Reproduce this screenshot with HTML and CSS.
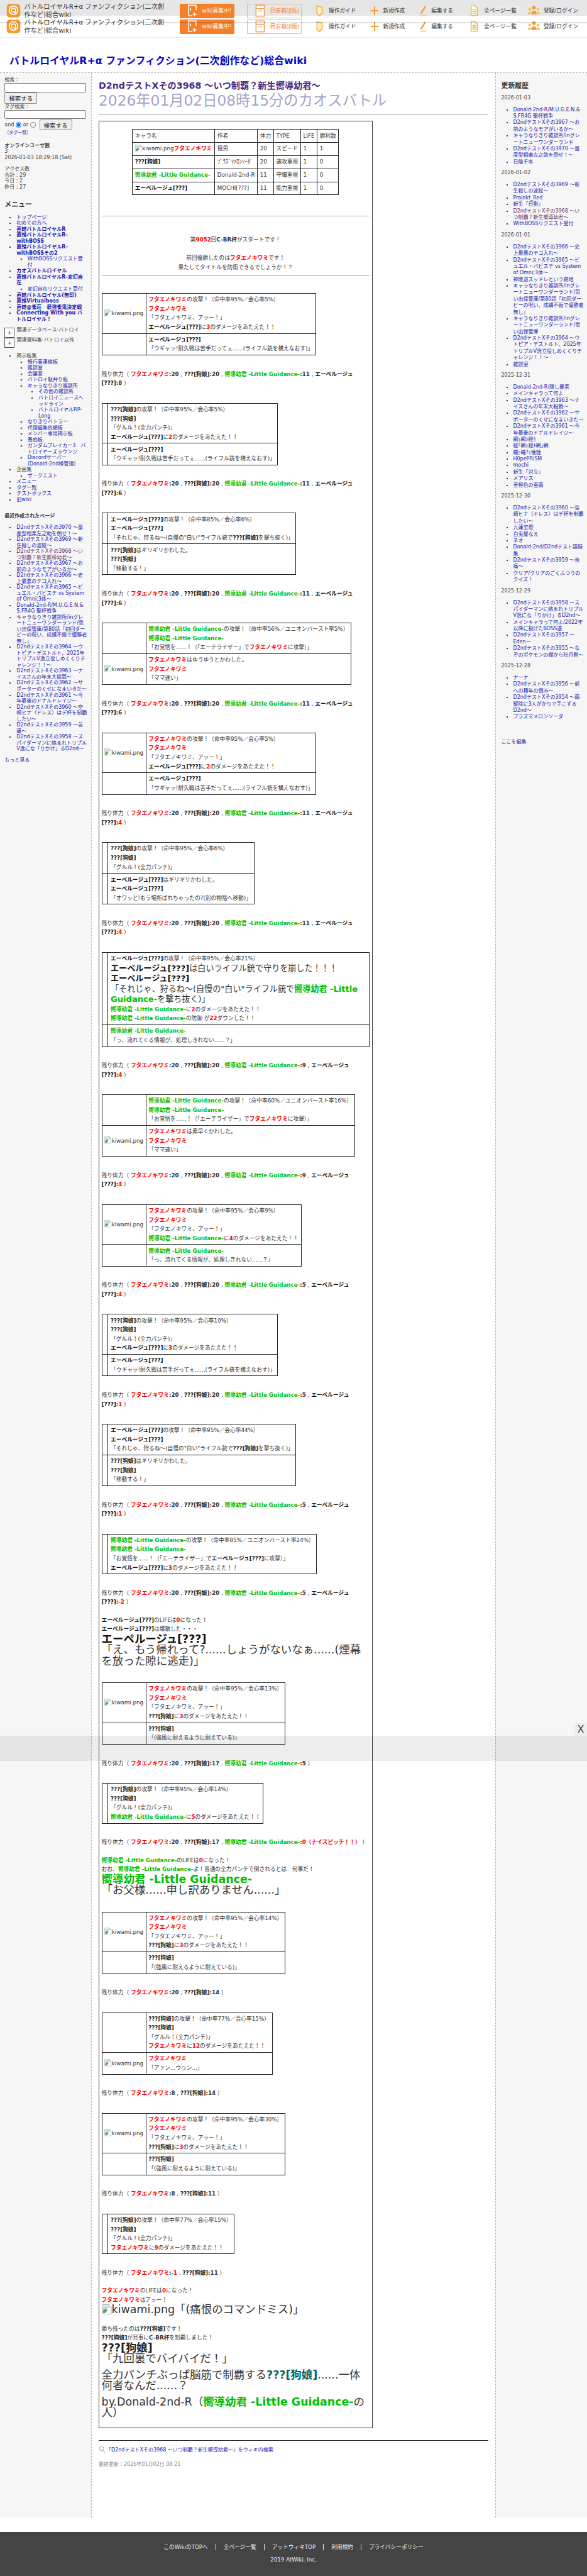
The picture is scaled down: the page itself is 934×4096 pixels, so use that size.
FILE: index.html
```html
<!DOCTYPE html>
<html lang="ja">
<head>
    <meta charset="utf-8">
    <title>D2ndテストXその3968 ～いつ制覇？新生嚮導幼君～</title>
    <link rel="stylesheet" href="styles.css">
</head>
<body>
    <!-- shared icons -->
    <svg class="defs" aria-hidden="true">
        <symbol id="i-logo" viewBox="0 0 32 32"><rect x="1" y="1" width="30" height="30" rx="7" fill="#f49a2c"/><circle cx="16" cy="15" r="9.5" fill="none" stroke="#fff" stroke-width="2.6"/><circle cx="16" cy="15" r="4.5" fill="none" stroke="#fff" stroke-width="2"/><path d="M20 15v7" stroke="#fff" stroke-width="2"/></symbol>
        <symbol id="i-guide" viewBox="0 0 16 26"><path d="M2 2l12 3v13l-6 7-6-5z" fill="#fff6d8" stroke="#eeb23e" stroke-width="2.4"/><path d="M9 6v15" stroke="#f7d98a" stroke-width="1.5"/></symbol>
        <symbol id="i-plus" viewBox="0 0 20 24"><path d="M10 2v20M1 12h18" stroke="#f0a030" stroke-width="3"/></symbol>
        <symbol id="i-pen" viewBox="0 0 18 26"><path d="M12 2l3 2-9 15-3 2 0-4z" fill="#f0a030"/><path d="M1 24h15" stroke="#f6cf6a" stroke-width="2.5"/></symbol>
        <symbol id="i-page" viewBox="0 0 18 26"><path d="M2 2h9l5 5v17H2z" fill="#fff9e8" stroke="#eeb23e" stroke-width="2"/><path d="M5 11h8M5 15h8M5 19h8" stroke="#eeb23e" stroke-width="1.6"/></symbol>
        <symbol id="i-users" viewBox="0 0 26 24"><circle cx="13" cy="5" r="4" fill="#f0a030"/><circle cx="4" cy="9" r="3" fill="#f6c25a"/><circle cx="22" cy="9" r="3" fill="#f6c25a"/><path d="M7 20c0-6 2-8 6-8s6 2 6 8z" fill="#f0a030"/><path d="M0 20c0-4 1-6 4-6l2 1-1 5zM26 20c0-4-1-6-4-6l-2 1 1 5z" fill="#f6c25a"/></symbol>
        <symbol id="i-wanted" viewBox="0 0 22 30"><path d="M14 2H2v25h9" fill="none" stroke="#fff" stroke-width="2.4"/><path d="M14 2h6v12" fill="none" stroke="#fff" stroke-width="2.4"/><path d="M16 19v9M12 23.500h9" stroke="#fff" stroke-width="2.4"/><path d="M7 8v7" stroke="#fff" stroke-width="2"/></symbol>
        <symbol id="i-box" viewBox="0 0 24 30"><rect x="2" y="2" width="20" height="26" fill="#fff" stroke="#f2a35f" stroke-width="2.400"/><path d="M2 10h20" stroke="#f2a35f" stroke-width="2.400"/><path d="M8 15h8" stroke="#f2a35f" stroke-width="2"/></symbol>
        <symbol id="i-broken" viewBox="0 0 16 16"><path d="M1 .500h10l4 4v11H1z" fill="#fff" stroke="#a8a8a8"/><path d="M11 .500v4h4" fill="#e8e8e8" stroke="#a8a8a8"/><path d="M2 2h8v6l-8 5z" fill="#c4dbf6"/><path d="M2 14V10l4-3 3 3-4 4z" fill="#4fa843"/></symbol>
        <symbol id="i-search" viewBox="0 0 14 16"><circle cx="6" cy="6" r="4.600" fill="none" stroke="#999" stroke-width="1.200"/><path d="M9 10l4 5" stroke="#999" stroke-width="1.300"/></symbol>
    </svg>

    <header class="topbar">
        <div class="nav-clip ghost">
            <span class="ghost-text ghost-rss">RSS</span>
            <span class="ghost-text ghost-find">ページ検索</span>
            <div class="nav">
                <svg class="logo"><use href="#i-logo"/></svg>
                <div class="site-name">バトルロイヤルR+α ファンフィクション(二次創作など)総合wiki</div>
                <a class="btn-orange"><svg class="btn-icon"><use href="#i-wanted"/></svg>wiki募集中!</a>
                <a class="btn-outline"><svg class="btn-icon"><use href="#i-box"/></svg>目安箱(β版)</a>
                <a class="nav-item guide"><svg><use href="#i-guide"/></svg>操作ガイド</a>
                <a class="nav-item add"><svg><use href="#i-plus"/></svg>新規作成</a>
                <a class="nav-item pen"><svg><use href="#i-pen"/></svg>編集する</a>
                <a class="nav-item all"><svg><use href="#i-page"/></svg>全ページ一覧</a>
                <a class="nav-item login"><svg><use href="#i-users"/></svg>登録/ログイン</a>
            </div>
        </div>
        <div class="nav-clip second">
            <div class="nav">
                <svg class="logo"><use href="#i-logo"/></svg>
                <div class="site-name">バトルロイヤルR+α ファンフィクション(二次創作など)総合wiki</div>
                <a class="btn-orange"><svg class="btn-icon"><use href="#i-wanted"/></svg>wiki募集中!</a>
                <a class="btn-outline"><svg class="btn-icon"><use href="#i-box"/></svg>目安箱(β版)</a>
                <a class="nav-item guide"><svg><use href="#i-guide"/></svg>操作ガイド</a>
                <a class="nav-item add"><svg><use href="#i-plus"/></svg>新規作成</a>
                <a class="nav-item pen"><svg><use href="#i-pen"/></svg>編集する</a>
                <a class="nav-item all"><svg><use href="#i-page"/></svg>全ページ一覧</a>
                <a class="nav-item login"><svg><use href="#i-users"/></svg>登録/ログイン</a>
            </div>
        </div>
        <div class="bar-shadow"></div>
    </header>

    <h1 class="wiki-title"><a>バトルロイヤルR+α ファンフィクション(二次創作など)総合wiki</a></h1>

    <div class="cols">
        <aside class="menu">
            <form class="search">
                <div>検索 :</div>
                <input type="text" class="field">
                <button type="button" class="go">検索する</button>
                <div>タグ検索 :</div>
                <input type="text" class="field">
                <div class="andor">and <input type="radio" name="m" checked> or <input type="radio" name="m"> <button type="button" class="go">検索する</button></div>
                <a class="taglist">（タグ一覧）</a>
            </form>
            <p class="online"><b>オンラインユーザ数</b><br>3<br>2026-01-03 18:29:18 (Sat)</p>
            <p class="access">アクセス数<br>合計 : 29<br>今日 : 2<br>昨日 : 27</p>
            <h3 class="side-head">メニュー</h3>
            <ul class="side-list">
                <li><a>トップページ</a></li>
                <li><a>初めての方へ</a></li>
                <li><a><b>直轄バトルロイヤルR</b></a></li>
                <li><a><b>直轄バトルロイヤルR-withBOSS</b></a></li>
                <li><a><b>直轄バトルロイヤルR-withBOSSその2</b></a>
                    <ul><li><a>WithBOSSリクエスト受付</a></li></ul></li>
                <li><a><b>カオスバトルロイヤル</b></a></li>
                <li><a><b>直轄バトルロイヤルR-変幻自在</b></a>
                    <ul><li><a>変幻自在リクエスト受付</a></li></ul></li>
                <li><a><b>直轄バトルロイヤル(無印)</b></a></li>
                <li><a><b>直轄Virtualboss</b></a></li>
                <li><a><b>直轄@雀荘　最強雀鬼決定戦</b></a></li>
                <li><a><b>Connecting With you バトルロイヤル！</b></a></li>
            </ul>
            <div class="fold"><button type="button" class="plus">+</button><span>関連データベース-バトロイ</span></div>
            <div class="fold"><button type="button" class="plus">+</button><span>関連資料集-バトロイ以外</span></div>
            <ul class="side-list after-fold">
                <li>掲示板集
                    <ul>
                        <li><a>軽行事連絡板</a></li>
                        <li><a>雑談室</a></li>
                        <li><a>会議室</a></li>
                        <li><a>バトロイ駄弁り板</a></li>
                        <li><a>キャラなりきり雑談所</a>
                            <ul>
                                <li><a>その他の雑談所</a></li>
                                <li><a>バトロイニュースヘッドライン</a></li>
                                <li><a>バトルロイヤルRP-Long</a></li>
                            </ul></li>
                        <li><a>なりきりバトラー</a></li>
                        <li><a>代理編集依頼板</a></li>
                        <li><a>メンバー専用掲示板</a></li>
                        <li><a>愚痴板</a></li>
                        <li><a>ガンダムブレイカー3　バトロイヤーズラウンジ</a></li>
                        <li><a>Discordサーバー(Donald-2nd様管理)</a></li>
                    </ul></li>
                <li>企画集
                    <ul><li><a>ザ・クエスト</a></li></ul></li>
                <li><a>メニュー</a></li>
                <li><a>タグ一覧</a></li>
                <li><a>テストボックス</a></li>
                <li><a>旧wiki</a></li>
            </ul>
            <h4 class="recent-head">最近作成されたページ</h4>
            <ul class="side-list recent">
                <li><a>D2ndテストXその3970 ～量産型相楽左之助を倒せ！～</a></li>
                <li><a>D2ndテストXその3969 ～新生殺しの波紋～</a></li>
                <li><a class="seen">D2ndテストXその3968 ～いつ制覇？新生嚮導幼君～</a></li>
                <li><a>D2ndテストXその3967 ～お前のようなモアがいるか～</a></li>
                <li><a>D2ndテストXその3966 ～史上最悪のテコ入れ～</a></li>
                <li><a>D2ndテストXその3965 ～ビュエル・バビステ vs System of Omni;3体～</a></li>
                <li><a>Donald-2nd-R/M.U.G.E.N.&amp; S.FR4G 聖杯戦争</a></li>
                <li><a>キャラなりきり雑談所/inグレートニューワンダーランド/思い出保管庫/第80話「初回ダービーの呪い、成績不振で優勝者無し」</a></li>
                <li><a>D2ndテストXその3964 ～ウトピア・デストルト、2025年トリプルV逸立役しめくくりチャレンジ！！～</a></li>
                <li><a>D2ndテストXその3963 ～ナイスさんの年末大殺戮～</a></li>
                <li><a>D2ndテストXその3962 ～サポーターのくせになまいきだ～</a></li>
                <li><a>D2ndテストXその3961 ～今年最後のドナルドレイジ～</a></li>
                <li><a>D2ndテストXその3960 ～空崎ヒナ（ドレス）はデ杯を制覇したい～</a></li>
                <li><a>D2ndテストXその3959 ～苦痛～</a></li>
                <li><a>D2ndテストXその3958 ～スパイダーマンに絡まれトリプルV逸にな「りかけ」るD2nd～</a></li>
            </ul>
            <a class="more">もっと見る</a>
        </aside>

        <main class="main">
            <h2 class="page-title">D2ndテストXその3968 ～いつ制覇？新生嚮導幼君～</h2>
            <div class="battle-name">2026年01月02日08時15分のカオスバトル</div>
            <hr class="rule">

            <div class="log-box">
                <table class="chars">
                    <tr><td>キャラ名</td><td>作者</td><td>体力</td><td>TYPE</td><td>LIFE</td><td>勝利数</td></tr>
                    <tr><td><svg class="broken"><use href="#i-broken"/></svg>kiwami.png<b class="k">フタエノキワミ</b></td><td>極男</td><td>20</td><td>スピード</td><td>1</td><td>1</td></tr>
                    <tr><td><b class="i">???[狗娘]</b></td><td>ﾌﾟﾗｽﾞﾏﾒﾛﾝｿｰﾀﾞ</td><td>20</td><td>速攻重視</td><td>1</td><td>0</td></tr>
                    <tr><td><b class="g">嚮導幼君 -Little Guidance-</b></td><td>Donald-2nd-R</td><td>11</td><td>守備重視</td><td>1</td><td>0</td></tr>
                    <tr><td><b class="e">エーペルージュ[???]</b></td><td>MOCHI[???]</td><td>11</td><td>能力重視</td><td>1</td><td>0</td></tr>
                </table>
                <hr class="log-rule">
                <p class="opening">第<b class="r">9052</b>回<b>C-BR杯</b>がスタートです！<br><br>前回優勝したのは<b class="k">フタエノキワミ</b>です！<br>果たしてタイトルを防衛できるでしょうか！？</p>
                <hr class="log-rule tight">

                <table class="turn">
                    <tr><td class="face"><svg class="broken"><use href="#i-broken"/></svg>kiwami.png</td><td><b class="k">フタエノキワミ</b>の攻撃！（命中率95%／会心率5%）<br><b class="k">フタエノキワミ</b><br>「フタエノキワミ、アッー！」<br><b class="e">エーペルージュ[???]</b>に<b class="r">3</b>のダメージをあたえた！！</td></tr>
                    <tr><td class="face"></td><td><b class="e">エーペルージュ[???]</b><br>「ウギャッ!耐久戦は苦手だってぇ......(ライフル銃を構えなおす)」</td></tr>
                </table>
                <p class="hp">残り体力（ <b class="k">フタエノキワミ</b><b>:20</b> , <b class="i">???[狗娘]</b><b>:20</b> , <b class="g">嚮導幼君 -Little Guidance-</b><b>:11</b> , <b class="e">エーペルージュ[???]</b><b>:8</b> ）</p>

                <table class="turn">
                    <tr><td class="none"></td><td><b class="i">???[狗娘]</b>の攻撃！（命中率95%／会心率5%）<br><b class="i">???[狗娘]</b><br>「グルル！(全力パンチ)」<br><b class="e">エーペルージュ[???]</b>に<b class="r">2</b>のダメージをあたえた！！</td></tr>
                    <tr><td class="none"></td><td><b class="e">エーペルージュ[???]</b><br>「ウギャッ!耐久戦は苦手だってぇ......(ライフル銃を構えなおす)」</td></tr>
                </table>
                <p class="hp">残り体力（ <b class="k">フタエノキワミ</b><b>:20</b> , <b class="i">???[狗娘]</b><b>:20</b> , <b class="g">嚮導幼君 -Little Guidance-</b><b>:11</b> , <b class="e">エーペルージュ[???]</b><b>:6</b> ）</p>

                <table class="turn">
                    <tr><td class="none"></td><td><b class="e">エーペルージュ[???]</b>の攻撃！（命中率85%／会心率6%）<br><b class="e">エーペルージュ[???]</b><br>「それじゃ、狩るね～(自慢の"白い"ライフル銃で<b class="i">???[狗娘]</b>を撃ち抜く)」</td></tr>
                    <tr><td class="none"></td><td><b class="i">???[狗娘]</b>はギリギリかわした。<br><b class="i">???[狗娘]</b><br>「移動する！」</td></tr>
                </table>
                <p class="hp">残り体力（ <b class="k">フタエノキワミ</b><b>:20</b> , <b class="i">???[狗娘]</b><b>:20</b> , <b class="g">嚮導幼君 -Little Guidance-</b><b>:11</b> , <b class="e">エーペルージュ[???]</b><b>:6</b> ）</p>

                <table class="turn">
                    <tr><td class="face"></td><td><b class="g">嚮導幼君 -Little Guidance-</b>の攻撃！（命中率56%／ユニオンバースト率5%）<br><b class="g">嚮導幼君 -Little Guidance-</b><br>「お覚悟を......！（「エーテライザー」で<b class="k">フタエノキワミ</b>に攻撃）」</td></tr>
                    <tr><td class="face"><svg class="broken"><use href="#i-broken"/></svg>kiwami.png</td><td><b class="k">フタエノキワミ</b>はゆうゆうとかわした。<br><b class="k">フタエノキワミ</b><br>「ママ速い」</td></tr>
                </table>
                <p class="hp">残り体力（ <b class="k">フタエノキワミ</b><b>:20</b> , <b class="i">???[狗娘]</b><b>:20</b> , <b class="g">嚮導幼君 -Little Guidance-</b><b>:11</b> , <b class="e">エーペルージュ[???]</b><b>:6</b> ）</p>

                <table class="turn">
                    <tr><td class="face"><svg class="broken"><use href="#i-broken"/></svg>kiwami.png</td><td><b class="k">フタエノキワミ</b>の攻撃！（命中率95%／会心率5%）<br><b class="k">フタエノキワミ</b><br>「フタエノキワミ、アッー！」<br><b class="e">エーペルージュ[???]</b>に<b class="r">2</b>のダメージをあたえた！！</td></tr>
                    <tr><td class="face"></td><td><b class="e">エーペルージュ[???]</b><br>「ウギャッ!耐久戦は苦手だってぇ......(ライフル銃を構えなおす)」</td></tr>
                </table>
                <p class="hp">残り体力（ <b class="k">フタエノキワミ</b><b>:20</b> , <b class="i">???[狗娘]</b><b>:20</b> , <b class="g">嚮導幼君 -Little Guidance-</b><b>:11</b> , <b class="e">エーペルージュ[???]</b><b>:<span class="r">4</span></b> ）</p>

                <table class="turn">
                    <tr><td class="none"></td><td><b class="i">???[狗娘]</b>の攻撃！（命中率95%／会心率6%）<br><b class="i">???[狗娘]</b><br>「グルル！(全力パンチ)」</td></tr>
                    <tr><td class="none"></td><td><b class="e">エーペルージュ[???]</b>はギリギリかわした。<br><b class="e">エーペルージュ[???]</b><br>「オワッと!もう場所ばれちゃったの?(別の物陰へ移動)」</td></tr>
                </table>
                <p class="hp">残り体力（ <b class="k">フタエノキワミ</b><b>:20</b> , <b class="i">???[狗娘]</b><b>:20</b> , <b class="g">嚮導幼君 -Little Guidance-</b><b>:11</b> , <b class="e">エーペルージュ[???]</b><b>:<span class="r">4</span></b> ）</p>

                <table class="turn wide">
                    <tr><td class="none"></td><td><b class="e">エーペルージュ[???]</b>の攻撃！（命中率95%／会心率21%）<br><span class="crit"><b class="e">エーペルージュ[???]</b>は白いライフル銃で守りを崩した！！！<br><b class="e">エーペルージュ[???]</b><br>「それじゃ、狩るね～(自慢の"白い"ライフル銃で<b class="g">嚮導幼君 -Little Guidance-</b>を撃ち抜く)」</span><br><b class="g">嚮導幼君 -Little Guidance-</b>に<b class="r">2</b>のダメージをあたえた！！<br><b class="g">嚮導幼君 -Little Guidance-</b>の防御 が<b class="r">22</b>ダウンした！！</td></tr>
                    <tr><td class="none"></td><td><b class="g">嚮導幼君 -Little Guidance-</b><br>「っ、流れてくる情報が、処理しきれない......？」</td></tr>
                </table>
                <p class="hp">残り体力（ <b class="k">フタエノキワミ</b><b>:20</b> , <b class="i">???[狗娘]</b><b>:20</b> , <b class="g">嚮導幼君 -Little Guidance-</b><b>:9</b> , <b class="e">エーペルージュ[???]</b><b>:<span class="r">4</span></b> ）</p>

                <table class="turn">
                    <tr><td class="face"></td><td><b class="g">嚮導幼君 -Little Guidance-</b>の攻撃！（命中率60%／ユニオンバースト率16%）<br><b class="g">嚮導幼君 -Little Guidance-</b><br>「お覚悟を......！（「エーテライザー」で<b class="k">フタエノキワミ</b>に攻撃）」</td></tr>
                    <tr><td class="face"><svg class="broken"><use href="#i-broken"/></svg>kiwami.png</td><td><b class="k">フタエノキワミ</b>は素早くかわした。<br><b class="k">フタエノキワミ</b><br>「ママ速い」</td></tr>
                </table>
                <p class="hp">残り体力（ <b class="k">フタエノキワミ</b><b>:20</b> , <b class="i">???[狗娘]</b><b>:20</b> , <b class="g">嚮導幼君 -Little Guidance-</b><b>:9</b> , <b class="e">エーペルージュ[???]</b><b>:<span class="r">4</span></b> ）</p>

                <table class="turn">
                    <tr><td class="face"><svg class="broken"><use href="#i-broken"/></svg>kiwami.png</td><td><b class="k">フタエノキワミ</b>の攻撃！（命中率95%／会心率9%）<br><b class="k">フタエノキワミ</b><br>「フタエノキワミ、アッー！」<br><b class="g">嚮導幼君 -Little Guidance-</b>に<b class="r">4</b>のダメージをあたえた！！</td></tr>
                    <tr><td class="face"></td><td><b class="g">嚮導幼君 -Little Guidance-</b><br>「っ、流れてくる情報が、処理しきれない......？」</td></tr>
                </table>
                <p class="hp">残り体力（ <b class="k">フタエノキワミ</b><b>:20</b> , <b class="i">???[狗娘]</b><b>:20</b> , <b class="g">嚮導幼君 -Little Guidance-</b><b>:5</b> , <b class="e">エーペルージュ[???]</b><b>:<span class="r">4</span></b> ）</p>

                <table class="turn">
                    <tr><td class="none"></td><td><b class="i">???[狗娘]</b>の攻撃！（命中率95%／会心率10%）<br><b class="i">???[狗娘]</b><br>「グルル！(全力パンチ)」<br><b class="e">エーペルージュ[???]</b>に<b class="r">3</b>のダメージをあたえた！！</td></tr>
                    <tr><td class="none"></td><td><b class="e">エーペルージュ[???]</b><br>「ウギャッ!耐久戦は苦手だってぇ......(ライフル銃を構えなおす)」</td></tr>
                </table>
                <p class="hp">残り体力（ <b class="k">フタエノキワミ</b><b>:20</b> , <b class="i">???[狗娘]</b><b>:20</b> , <b class="g">嚮導幼君 -Little Guidance-</b><b>:5</b> , <b class="e">エーペルージュ[???]</b><b>:<span class="r">1</span></b> ）</p>

                <table class="turn">
                    <tr><td class="none"></td><td><b class="e">エーペルージュ[???]</b>の攻撃！（命中率95%／会心率44%）<br><b class="e">エーペルージュ[???]</b><br>「それじゃ、狩るね～(自慢の"白い"ライフル銃で<b class="i">???[狗娘]</b>を撃ち抜く)」</td></tr>
                    <tr><td class="none"></td><td><b class="i">???[狗娘]</b>はギリギリかわした。<br><b class="i">???[狗娘]</b><br>「移動する！」</td></tr>
                </table>
                <p class="hp">残り体力（ <b class="k">フタエノキワミ</b><b>:20</b> , <b class="i">???[狗娘]</b><b>:20</b> , <b class="g">嚮導幼君 -Little Guidance-</b><b>:5</b> , <b class="e">エーペルージュ[???]</b><b>:<span class="r">1</span></b> ）</p>

                <table class="turn">
                    <tr><td class="none"></td><td><b class="g">嚮導幼君 -Little Guidance-</b>の攻撃！（命中率85%／ユニオンバースト率24%）<br><b class="g">嚮導幼君 -Little Guidance-</b><br>「お覚悟を......！（「エーテライザー」で<b class="e">エーペルージュ[???]</b>に攻撃）」<br><b class="e">エーペルージュ[???]</b>に<b class="r">3</b>のダメージをあたえた！！</td></tr>
                </table>
                <p class="hp before-ko">残り体力（ <b class="k">フタエノキワミ</b><b>:20</b> , <b class="i">???[狗娘]</b><b>:20</b> , <b class="g">嚮導幼君 -Little Guidance-</b><b>:5</b> , <b class="e">エーペルージュ[???]</b><b>:<span class="r">-2</span></b> ）</p>

                <div class="ko">
                    <b class="e">エーペルージュ[???]</b>のLIFEは<b class="r">0</b>になった！<br>
                    <b class="e">エーペルージュ[???]</b>は爆散した・・・<br>
                    <div class="last-words"><b class="e">エーペルージュ[???]</b><br>「え、もう帰れって?......しょうがないなぁ......(煙幕を放った隙に逃走)」</div>
                </div>

                <table class="turn">
                    <tr><td class="face"><svg class="broken"><use href="#i-broken"/></svg>kiwami.png</td><td><b class="k">フタエノキワミ</b>の攻撃！（命中率95%／会心率13%）<br><b class="k">フタエノキワミ</b><br>「フタエノキワミ、アッー！」<br><b class="i">???[狗娘]</b>に<b class="r">3</b>のダメージをあたえた！！</td></tr>
                    <tr><td class="face"></td><td><b class="i">???[狗娘]</b><br>「(強風に耐えるように耐えている)」</td></tr>
                </table>
                <p class="hp">残り体力（ <b class="k">フタエノキワミ</b><b>:20</b> , <b class="i">???[狗娘]</b><b>:17</b> , <b class="g">嚮導幼君 -Little Guidance-</b><b>:5</b> ）</p>

                <table class="turn">
                    <tr><td class="none"></td><td><b class="i">???[狗娘]</b>の攻撃！（命中率95%／会心率14%）<br><b class="i">???[狗娘]</b><br>「グルル！(全力パンチ)」<br><b class="g">嚮導幼君 -Little Guidance-</b>に<b class="r">5</b>のダメージをあたえた！！</td></tr>
                </table>
                <p class="hp before-ko">残り体力（ <b class="k">フタエノキワミ</b><b>:20</b> , <b class="i">???[狗娘]</b><b>:17</b> , <b class="g">嚮導幼君 -Little Guidance-</b><b>:<span class="r">0（ナイスピッチ！！）</span></b> ）</p>

                <div class="ko">
                    <b class="g">嚮導幼君 -Little Guidance-</b>のLIFEは<b class="r">0</b>になった！<br>
                    おお、<b class="g">嚮導幼君 -Little Guidance-</b>よ！普通の全力パンチで倒されるとは　何事だ！<br>
                    <div class="last-words"><b class="g">嚮導幼君 -Little Guidance-</b><br>「お父様......申し訳ありません......」</div>
                </div>

                <table class="turn">
                    <tr><td class="face"><svg class="broken"><use href="#i-broken"/></svg>kiwami.png</td><td><b class="k">フタエノキワミ</b>の攻撃！（命中率95%／会心率14%）<br><b class="k">フタエノキワミ</b><br>「フタエノキワミ、アッー！」<br><b class="i">???[狗娘]</b>に<b class="r">3</b>のダメージをあたえた！！</td></tr>
                    <tr><td class="face"></td><td><b class="i">???[狗娘]</b><br>「(強風に耐えるように耐えている)」</td></tr>
                </table>
                <p class="hp">残り体力（ <b class="k">フタエノキワミ</b><b>:20</b> , <b class="i">???[狗娘]</b><b>:14</b> ）</p>

                <table class="turn">
                    <tr><td class="face"></td><td><b class="i">???[狗娘]</b>の攻撃！（命中率77%／会心率15%）<br><b class="i">???[狗娘]</b><br>「グルル！(全力パンチ)」<br><b class="k">フタエノキワミ</b>に<b class="r">12</b>のダメージをあたえた！！</td></tr>
                    <tr><td class="face"><svg class="broken"><use href="#i-broken"/></svg>kiwami.png</td><td><b class="k">フタエノキワミ</b><br>「アァン...ウゥン...」</td></tr>
                </table>
                <p class="hp">残り体力（ <b class="k">フタエノキワミ</b><b>:8</b> , <b class="i">???[狗娘]</b><b>:14</b> ）</p>

                <table class="turn">
                    <tr><td class="face"><svg class="broken"><use href="#i-broken"/></svg>kiwami.png</td><td><b class="k">フタエノキワミ</b>の攻撃！（命中率95%／会心率30%）<br><b class="k">フタエノキワミ</b><br>「フタエノキワミ、アッー！」<br><b class="i">???[狗娘]</b>に<b class="r">3</b>のダメージをあたえた！！</td></tr>
                    <tr><td class="face"></td><td><b class="i">???[狗娘]</b><br>「(強風に耐えるように耐えている)」</td></tr>
                </table>
                <p class="hp">残り体力（ <b class="k">フタエノキワミ</b><b>:8</b> , <b class="i">???[狗娘]</b><b>:11</b> ）</p>

                <table class="turn">
                    <tr><td class="none"></td><td><b class="i">???[狗娘]</b>の攻撃！（命中率77%／会心率15%）<br><b class="i">???[狗娘]</b><br>「グルル！(全力パンチ)」<br><b class="k">フタエノキワミ</b>に<b class="r">9</b>のダメージをあたえた！！</td></tr>
                </table>
                <p class="hp before-ko">残り体力（ <b class="k">フタエノキワミ</b><b>:<span class="r">-1</span></b> , <b class="i">???[狗娘]</b><b>:11</b> ）</p>

                <div class="ko">
                    <b class="k">フタエノキワミ</b>のLIFEは<b class="r">0</b>になった！<br>
                    <b class="k">フタエノキワミ</b>はアッー！<br>
                    <div class="last-words"><svg class="broken big"><use href="#i-broken"/></svg>kiwami.png「(痛恨のコマンドミス)」</div>
                </div>
                <div class="winner">
                    勝ち残ったのは<b class="i">???[狗娘]</b>です！<br>
                    <b class="i">???[狗娘]</b>が見事に<b>C-BR杯</b>を制覇しました！<br>
                    <div class="last-words"><b class="i">???[狗娘]</b><br>「九回裏でバイバイだ！」</div>
                    <div class="last-words gap">全力パンチぶっぱ脳筋で制覇する<b class="teal">???[狗娘]</b>......一体何者なんだ......？</div>
                    <div class="last-words gap">by.Donald-2nd-R（<b class="g">嚮導幼君 -Little Guidance-</b>の人）</div>
                </div>
            </div>

            <hr class="rule dark">
            <div class="wiki-search"><svg class="lens"><use href="#i-search"/></svg><a>「D2ndテストXその3968 ～いつ制覇？新生嚮導幼君～」をウィキ内検索</a></div>
            <div class="updated">最終更新：2026年01月02日 08:21</div>
        </main>

        <aside class="history">
            <h3 class="side-head">更新履歴</h3>
            <div class="day">2026-01-03</div>
            <ul class="side-list">
                <li><a>Donald-2nd-R/M.U.G.E.N.&amp; S.FR4G 聖杯戦争</a></li>
                <li><a>D2ndテストXその3967 ～お前のようなモアがいるか～</a></li>
                <li><a>キャラなりきり雑談所/inグレートニューワンダーランド</a></li>
                <li><a>D2ndテストXその3970 ～量産型相楽左之助を倒せ！～</a></li>
                <li><a>日陰千冬</a></li>
            </ul>
            <div class="day">2026-01-02</div>
            <ul class="side-list">
                <li><a>D2ndテストXその3969 ～新生殺しの波紋～</a></li>
                <li><a>Projekt_Red</a></li>
                <li><a>新生「日影」</a></li>
                <li><a class="seen">D2ndテストXその3968 ～いつ制覇？新生嚮導幼君～</a></li>
                <li><a>WithBOSSリクエスト受付</a></li>
            </ul>
            <div class="day">2026-01-01</div>
            <ul class="side-list">
                <li><a>D2ndテストXその3966 ～史上最悪のテコ入れ～</a></li>
                <li><a>D2ndテストXその3965 ～ビュエル・バビステ vs System of Omni;3体～</a></li>
                <li><a>神敗退スッドレという跡地</a></li>
                <li><a>キャラなりきり雑談所/inグレートニューワンダーランド/思い出保管庫/第80話「初回ダービーの呪い、成績不振で優勝者無し」</a></li>
                <li><a>キャラなりきり雑談所/inグレートニューワンダーランド/思い出保管庫</a></li>
                <li><a>D2ndテストXその3964 ～ウトピア・デストルト、2025年トリプルV逸立役しめくくりチャレンジ！！～</a></li>
                <li><a>雑談室</a></li>
            </ul>
            <div class="day">2025-12-31</div>
            <ul class="side-list">
                <li><a>Donald-2nd-R/隠し要素</a></li>
                <li><a>メインキャラって何よ</a></li>
                <li><a>D2ndテストXその3963 ～ナイスさんの年末大殺戮～</a></li>
                <li><a>D2ndテストXその3962 ～サポーターのくせになまいきだ～</a></li>
                <li><a>D2ndテストXその3961 ～今年最後のドナルドレイジ～</a></li>
                <li><a>網ｪ網ｼ経ｶ</a></li>
                <li><a>経｢網ｫ経ｷ網｣網</a></li>
                <li><a>蠕ｩ蠅?ｫ懐錘</a></li>
                <li><a>H0pePRiSM</a></li>
                <li><a>mochi</a></li>
                <li><a>新生「対立」</a></li>
                <li><a>メアリス</a></li>
                <li><a>至極色の蚕繭</a></li>
            </ul>
            <div class="day">2025-12-30</div>
            <ul class="side-list">
                <li><a>D2ndテストXその3960 ～空崎ヒナ（ドレス）はデ杯を制覇したい～</a></li>
                <li><a>九蓮宝燈</a></li>
                <li><a>白兎屋なえ</a></li>
                <li><a>ネオ</a></li>
                <li><a>Donald-2nd/D2ndテスト語録集</a></li>
                <li><a>D2ndテストXその3959 ～苦痛～</a></li>
                <li><a>クリア/クリアのごくふつうのクイズ！</a></li>
            </ul>
            <div class="day">2025-12-29</div>
            <ul class="side-list">
                <li><a>D2ndテストXその3958 ～スパイダーマンに絡まれトリプルV逸にな「りかけ」るD2nd～</a></li>
                <li><a>メインキャラって何よ/2022年以降に投げたBOSS達</a></li>
                <li><a>D2ndテストXその3957 ～Eden～</a></li>
                <li><a>D2ndテストXその3955 ～なぞのポケモンの棚から牡丹餅～</a></li>
            </ul>
            <div class="day">2025-12-28</div>
            <ul class="side-list">
                <li><a>ナーナ</a></li>
                <li><a>D2ndテストXその3956 ～爺への積年の恨み～</a></li>
                <li><a>D2ndテストXその3954 ～繭駆除に3人がかりで手こずるD2nd～</a></li>
                <li><a>プラズマメロンソーダ</a></li>
            </ul>
            <a class="edit-here">ここを編集</a>
        </aside>
    </div>

    <footer class="foot">
        <nav class="foot-links">
            <a>このWikiのTOPへ</a>
            <a>全ページ一覧</a>
            <a>アットウィキTOP</a>
            <a>利用規約</a>
            <a>プライバシーポリシー</a>
        </nav>
        <div class="copyright">2019 AtWiki, Inc.</div>
    </footer>

    <!-- ad strip lying over the page -->
    <div class="ad-strip"><span class="ad-close">X</span></div>
</body>
</html>
```

FILE: styles.css
```css
* {
    box-sizing: border-box;
}

body {
    margin: 0;
    width: 934px;
    height: 4096px;
    position: relative;
    overflow: hidden;
    background: #fff;
    color: #333;
    font-family: "DejaVu Sans", "Noto Sans CJK JP", sans-serif;
    font-size: 8.72px;
    line-height: 14.54px;
}

.defs {
    position: absolute;
    width: 0;
    height: 0;
}

a {
    color: #1c1cb0;
}

/* Top bar, drawn twice in the capture */
.topbar {
    position: relative;
    height: 60.3px;
    border-bottom: 1px solid #eee;
}

.nav-clip {
    overflow: hidden;
    position: relative;
}

.ghost {
    height: 29px;
    background: linear-gradient(#e6e6e6 0, #e6e6e6 24.7px, #fff 24.7px);
}

.second {
    height: 30px;
}

.second .nav {
    margin-top: -4px;
}

.ghost-text {
    position: absolute;
    top: 6px;
    color: #f4f4f4;
    font-size: 8.7px;
}

.ghost-rss {
    left: 316px;
}

.ghost-find {
    left: 786px;
}

.nav {
    display: flex;
    align-items: center;
    height: 34.8px;
    padding-left: 9.5px;
    position: relative;
}

.logo {
    width: 23px;
    height: 24px;
    flex: none;
}

.site-name {
    width: 232px;
    margin-left: 6px;
    font-size: 10.2px;
    line-height: 13px;
    color: #333;
    flex: none;
}

.btn-orange,
.btn-outline {
    display: flex;
    align-items: center;
    width: 87.5px;
    height: 23.5px;
    flex: none;
    font-size: 8.7px;
    border-radius: 1px;
}

.btn-orange {
    margin-left: 15px;
    background: #f67f2a;
    color: #fff;
}

.btn-outline {
    margin-left: 19.5px;
    border: 1px solid #f5b184;
    color: #f0873c;
}

.btn-icon {
    width: 16px;
    height: 20px;
    margin: 0 8px 0 12px;
    flex: none;
}

.nav-item {
    display: flex;
    align-items: center;
    flex: none;
    color: #333;
    font-size: 8.7px;
}

.nav-item svg {
    height: 18px;
    margin-right: 6px;
    flex: none;
}

.guide {
    margin-left: 23px;
}

.guide svg {
    width: 11px;
    margin-right: 9px;
}

.add {
    margin-left: 23px;
}

.add svg {
    width: 14px;
}

.pen {
    margin-left: 23px;
}

.pen svg {
    width: 13px;
}

.all {
    margin-left: 27px;
}

.all svg {
    width: 13px;
    margin-right: 9px;
}

.login {
    margin-left: 18px;
}

.login svg {
    width: 19px;
}

.bar-shadow {
    position: absolute;
    left: 0;
    right: 0;
    top: 34.5px;
    height: 2px;
    background: rgba(0, 0, 0, 0.12);
}

/* Wiki title */
.wiki-title {
    margin: 0;
    height: 55.3px;
    padding: 26.5px 0 0 15px;
    font-size: 15.9px;
    line-height: 20px;
    border-bottom: 1px dashed #bbb;
}

.wiki-title a {
    color: #0808c8;
}

/* Three columns */
.cols {
    display: grid;
    grid-template-columns: 146px 642px 146px;
    height: 3887.6px;
}

.menu,
.history {
    background: #f6f6f6;
    font-size: 8px;
    color: #444;
}

.menu {
    border-right: 1px dashed #bbb;
    padding: 6.5px 6.5px 0 7.3px;
    line-height: 9.52px;
}

.history {
    border-left: 1px dashed #bbb;
    padding: 14px 5px 0 8.5px;
    line-height: 10.37px;
}

.field {
    display: block;
    width: 129.5px;
    height: 14.5px;
    margin: 0.5px 0 0;
    padding: 0;
    border: 1px solid #767676;
    border-radius: 2px;
    background: #fff;
}

.go {
    height: 17.5px;
    padding: 0 6px;
    margin: 0.7px 0 0;
    border: 1px solid #8b8b8b;
    border-radius: 2px;
    background: #efefef;
    color: #222;
    font: 9.5px "DejaVu Sans", "Noto Sans CJK JP", sans-serif;
    display: block;
}

.andor {
    display: flex;
    align-items: center;
    gap: 2.5px;
    margin-top: 0.5px;
}

.andor .go {
    margin: 0 0 0 3px;
}

.andor input {
    width: 9.5px;
    height: 9.5px;
    margin: 0;
}

.taglist {
    display: block;
    font-size: 7px;
    line-height: 9px;
}

.online {
    margin: 10.4px 0 0;
}

.access {
    margin: 9px 0 0;
}

.side-head {
    margin: 17px 0 7.5px;
    font-size: 10.9px;
    line-height: 14px;
    color: #333;
}

.side-list {
    margin: 0;
    padding-left: 19px;
    list-style: square;
}

.side-list ul {
    margin: 0;
    padding-left: 17.4px;
    list-style: circle;
}

.side-list ul ul {
    list-style: square;
}

.fold {
    display: flex;
    align-items: flex-start;
    height: 16px;
}

.fold span {
    margin-top: -1px;
}

.fold:first-of-type {
    margin-top: 9px;
}

.plus {
    width: 16px;
    height: 16px;
    padding: 0;
    margin-right: 3.5px;
    flex: none;
    border: 1px solid #555;
    background: #fff;
    color: #333;
    font: 9px "DejaVu Sans", sans-serif;
}

.after-fold {
    margin-top: 8.3px;
}

.recent-head {
    margin: 16.4px 0 8.4px;
    font-size: 8px;
    line-height: 10px;
    color: #333;
}

.more {
    display: block;
    margin-top: 8px;
}

.day {
    margin: 7.3px 0 8.4px;
}

.history .side-head {
    margin: 0;
}

.edit-here {
    display: block;
    margin-top: 29.8px;
}

.seen {
    color: #663366;
}

/* Main column */
.main {
    padding: 10px 11px 0;
    min-width: 0;
}

.page-title {
    margin: 0;
    font-size: 14.2px;
    line-height: 20px;
    color: #4a2a82;
}

.battle-name {
    font-size: 23.3px;
    line-height: 27px;
    color: #a3a3cc;
}

.rule {
    margin: 9.5px 0 9.4px;
    border: 0;
    border-top: 1px solid #aaa;
}

.rule.dark {
    margin: 19px 0 0;
    border-top-color: #222;
}

.log-box {
    width: 435.5px;
    padding: 11.4px 3.6px 14px;
    border: 1px solid #333;
}

.chars {
    border-collapse: collapse;
    margin: 0 auto;
}

.chars td {
    border: 1px solid #222;
    padding: 2.7px 3.6px;
    white-space: nowrap;
}

.log-rule {
    margin: 32.5px 0 0;
    border: 0;
    border-top: 1px solid #aaa;
}

.log-rule.tight {
    margin: 6px 0 27px;
}

.opening {
    margin: 30px 0 0;
    text-align: center;
}

.turn {
    border-collapse: collapse;
}

.turn.wide {
    width: 100%;
}

.turn td {
    border: 1px solid #222;
    padding: 2.2px 3.6px;
}

.face {
    white-space: nowrap;
}

.none {
    width: 9.8px;
}

.broken {
    width: 11.6px;
    height: 11.6px;
    vertical-align: -2px;
}

.broken.big {
    width: 16px;
    height: 16px;
}

.crit {
    font-size: 13.1px;
    line-height: 16.5px;
}

.hp {
    margin: 22.5px 0 24px;
}

.hp.before-ko {
    margin-bottom: 13.8px;
}

.ko {
    margin-bottom: 25px;
}

.last-words {
    font-size: 17.45px;
    line-height: 17.45px;
    color: #333;
}

.last-words.gap {
    margin-top: 8px;
}

.winner {
    margin-top: -11px;
}

.winner .last-words.gap:last-child {
    padding-bottom: 0;
}

.k, .r {
    color: #f00;
}

.g {
    color: #00c000;
}

.e {
    color: #111;
}

.i {
    color: #222;
}

.teal {
    color: #006464;
}

.wiki-search {
    margin-top: 8px;
    font-size: 8px;
    color: #1c1cb0;
}

.lens {
    width: 11px;
    height: 12px;
    vertical-align: -3px;
    margin-right: 1px;
}

.updated {
    margin-top: 9px;
    font-size: 8px;
    color: #888;
}

/* Footer */
.foot {
    margin-top: 22.5px;
    height: 70.6px;
    background: #444;
    color: #eee;
    text-align: center;
    font-size: 8.7px;
}

.foot-links {
    display: flex;
    justify-content: center;
    padding-top: 19px;
    line-height: 10px;
}

.foot-links a {
    color: #eee;
    padding: 0 12px;
    border-right: 1px solid #eee;
}

.foot-links a:last-child {
    border-right: 0;
}

.copyright {
    margin-top: 8px;
    line-height: 14px;
}

/* Ad strip */
.ad-strip {
    position: absolute;
    left: 0;
    right: 0;
    top: 2760px;
    height: 40px;
    background: rgba(0, 0, 0, 0.07);
}

.ad-close {
    position: absolute;
    right: 0;
    top: -20px;
    width: 20px;
    height: 20px;
    background: #eee;
    border-top-left-radius: 5px;
    color: #444;
    font-size: 16px;
    line-height: 20px;
    text-align: center;
}
```
